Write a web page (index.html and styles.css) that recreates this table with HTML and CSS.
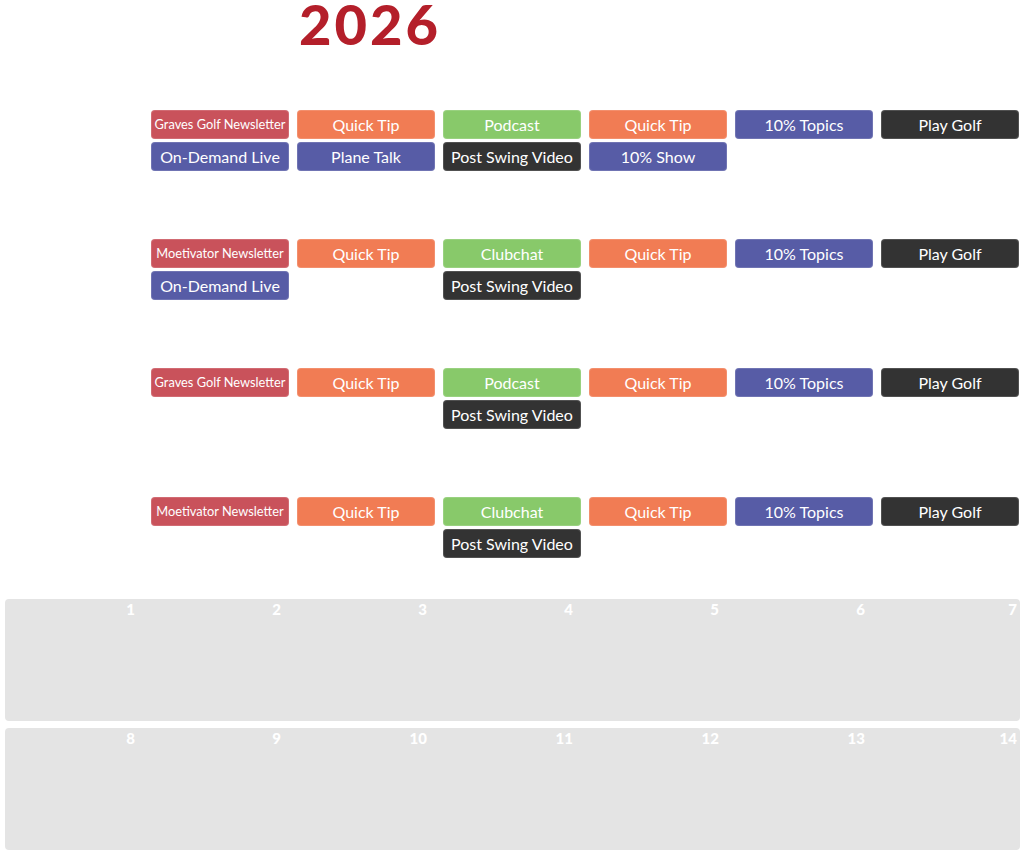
FILE: index.html
```html
<!DOCTYPE html>
<html>
<head>
<meta charset="utf-8">
<link rel="stylesheet" href="styles.css">
</head>
<body>
<div class="header"><h1 class="year">2026</h1></div>
<div class="calendar">
  <div class="week">
    <div class="day"><div class="num"></div></div>
    <div class="day"><div class="num"></div>
      <div class="chip red small">Graves Golf Newsletter</div>
      <div class="chip blue">On-Demand Live</div></div>
    <div class="day"><div class="num"></div>
      <div class="chip orange">Quick Tip</div>
      <div class="chip blue">Plane Talk</div></div>
    <div class="day"><div class="num"></div>
      <div class="chip green">Podcast</div>
      <div class="chip dark">Post Swing Video</div></div>
    <div class="day"><div class="num"></div>
      <div class="chip orange">Quick Tip</div>
      <div class="chip blue">10% Show</div></div>
    <div class="day"><div class="num"></div>
      <div class="chip blue">10% Topics</div></div>
    <div class="day"><div class="num"></div>
      <div class="chip dark">Play Golf</div></div>
  </div>
  <div class="week">
    <div class="day"><div class="num"></div></div>
    <div class="day"><div class="num"></div>
      <div class="chip red small">Moetivator Newsletter</div>
      <div class="chip blue">On-Demand Live</div></div>
    <div class="day"><div class="num"></div>
      <div class="chip orange">Quick Tip</div></div>
    <div class="day"><div class="num"></div>
      <div class="chip green">Clubchat</div>
      <div class="chip dark">Post Swing Video</div></div>
    <div class="day"><div class="num"></div>
      <div class="chip orange">Quick Tip</div></div>
    <div class="day"><div class="num"></div>
      <div class="chip blue">10% Topics</div></div>
    <div class="day"><div class="num"></div>
      <div class="chip dark">Play Golf</div></div>
  </div>
  <div class="week">
    <div class="day"><div class="num"></div></div>
    <div class="day"><div class="num"></div>
      <div class="chip red small">Graves Golf Newsletter</div></div>
    <div class="day"><div class="num"></div>
      <div class="chip orange">Quick Tip</div></div>
    <div class="day"><div class="num"></div>
      <div class="chip green">Podcast</div>
      <div class="chip dark">Post Swing Video</div></div>
    <div class="day"><div class="num"></div>
      <div class="chip orange">Quick Tip</div></div>
    <div class="day"><div class="num"></div>
      <div class="chip blue">10% Topics</div></div>
    <div class="day"><div class="num"></div>
      <div class="chip dark">Play Golf</div></div>
  </div>
  <div class="week">
    <div class="day"><div class="num"></div></div>
    <div class="day"><div class="num"></div>
      <div class="chip red small">Moetivator Newsletter</div></div>
    <div class="day"><div class="num"></div>
      <div class="chip orange">Quick Tip</div></div>
    <div class="day"><div class="num"></div>
      <div class="chip green">Clubchat</div>
      <div class="chip dark">Post Swing Video</div></div>
    <div class="day"><div class="num"></div>
      <div class="chip orange">Quick Tip</div></div>
    <div class="day"><div class="num"></div>
      <div class="chip blue">10% Topics</div></div>
    <div class="day"><div class="num"></div>
      <div class="chip dark">Play Golf</div></div>
  </div>
  <div class="week filled">
    <div class="day"><div class="num">1</div></div>
    <div class="day"><div class="num">2</div></div>
    <div class="day"><div class="num">3</div></div>
    <div class="day"><div class="num">4</div></div>
    <div class="day"><div class="num">5</div></div>
    <div class="day"><div class="num">6</div></div>
    <div class="day"><div class="num">7</div></div>
  </div>
  <div class="week filled">
    <div class="day"><div class="num">8</div></div>
    <div class="day"><div class="num">9</div></div>
    <div class="day"><div class="num">10</div></div>
    <div class="day"><div class="num">11</div></div>
    <div class="day"><div class="num">12</div></div>
    <div class="day"><div class="num">13</div></div>
    <div class="day"><div class="num">14</div></div>
  </div>
</div>
</body>
</html>
```

FILE: styles.css
```css
html, body {
  margin: 0;
  padding: 0;
  background: #ffffff;
  font-family: "Lato", "Liberation Sans", sans-serif;
  overflow: hidden;
}

.header {
  height: 83px;
  padding-left: 299px;
  box-sizing: border-box;
}

.year {
  margin: 0;
  font-family: "Lato", sans-serif;
  font-weight: 900;
  font-size: 56px;
  line-height: 48px;
  color: #b41f2a;
  letter-spacing: 3px;
}

.calendar {
  display: flex;
  flex-direction: column;
  gap: 7px;
  margin: 0 5px;
}

.week {
  display: grid;
  grid-template-columns: repeat(7, 138px);
  column-gap: 8px;
  height: 122px;
  width: 1015px;
  border-radius: 4px;
}

.week.filled {
  background: #e4e4e4;
}

.day {
  display: flex;
  flex-direction: column;
  gap: 3px;
}

.num {
  height: 24px;
  padding-right: 8px;
  text-align: right;
  font-weight: 900;
  font-size: 15px;
  line-height: 20px;
  color: #ffffff;
}

.day:last-child .num {
  padding-right: 2px;
}

.chip {
  height: 29px;
  border-radius: 4px;
  color: #ffffff;
  font-size: 16px;
  line-height: 29px;
  text-align: center;
  white-space: nowrap;
  box-shadow: inset 0 0 0 1px rgba(255, 255, 255, 0.15);
}

.chip.small {
  font-size: 12.8px;
}

.red { background: #c9525b; }
.orange { background: #f17c54; }
.green { background: #88c96a; }
.blue { background: #575ca6; }
.dark { background: #333333; }
```
